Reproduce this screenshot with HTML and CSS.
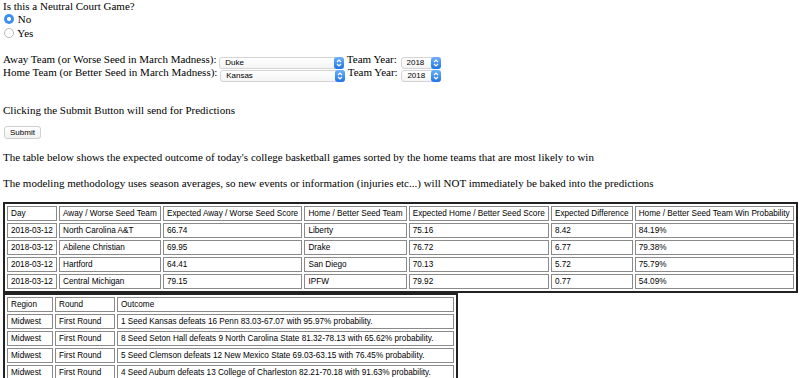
FILE: index.html
```html
<!DOCTYPE html>
<html>
<head>
    <title>College Basketball Predictions</title>
    <link rel="stylesheet" href="styles.css">
</head>
<body>
    <form id="gameForm">
        Is this a Neutral Court Game?<br>
        <label class="choice"><input type="radio" name="neutral" value="no" checked> No</label><br>
        <label class="choice"><input type="radio" name="neutral" value="yes"> Yes</label><br>
        <br>
        <div class="team-row">
            Away Team (or Worse Seed in March Madness):
            <span class="picker picker-team">
                <select id="awayTeam"><option>Duke</option><option>Kansas</option></select>
                <span class="arrows"><svg width="8" height="10" viewBox="0 0 8 10"><path d="M2 4 L4 2 L6 4 M2 6 L4 8 L6 6" fill="none" stroke="#fff" stroke-width="1.2"/></svg></span>
            </span>
            Team Year:
            <span class="picker picker-year">
                <select id="awayYear"><option>2018</option><option>2017</option></select>
                <span class="arrows"><svg width="8" height="10" viewBox="0 0 8 10"><path d="M2 4 L4 2 L6 4 M2 6 L4 8 L6 6" fill="none" stroke="#fff" stroke-width="1.2"/></svg></span>
            </span>
        </div>
        <div class="team-row">
            Home Team (or Better Seed in March Madness):
            <span class="picker picker-team">
                <select id="homeTeam"><option>Kansas</option><option>Duke</option></select>
                <span class="arrows"><svg width="8" height="10" viewBox="0 0 8 10"><path d="M2 4 L4 2 L6 4 M2 6 L4 8 L6 6" fill="none" stroke="#fff" stroke-width="1.2"/></svg></span>
            </span>
            Team Year:
            <span class="picker picker-year">
                <select id="homeYear"><option>2018</option><option>2017</option></select>
                <span class="arrows"><svg width="8" height="10" viewBox="0 0 8 10"><path d="M2 4 L4 2 L6 4 M2 6 L4 8 L6 6" fill="none" stroke="#fff" stroke-width="1.2"/></svg></span>
            </span>
        </div>
        <br>
        <p>Clicking the Submit Button will send for Predictions</p>
        <button type="submit" class="submit">Submit</button>
    </form>

    <p class="note">The table below shows the expected outcome of today's college basketball games sorted by the home teams that are most likely to win</p>
    <p class="note">The modeling methodology uses season averages, so new events or information (injuries etc...) will NOT immediately be baked into the predictions</p>

    <table class="grid predictions">
        <tr>
            <th>Day</th>
            <th>Away / Worse Seed Team</th>
            <th>Expected Away / Worse Seed Score</th>
            <th>Home / Better Seed Team</th>
            <th>Expected Home / Better Seed Score</th>
            <th>Expected Difference</th>
            <th>Home / Better Seed Team Win Probability</th>
        </tr>
        <tr><td>2018-03-12</td><td>North Carolina A&amp;T</td><td>66.74</td><td>Liberty</td><td>75.16</td><td>8.42</td><td>84.19%</td></tr>
        <tr><td>2018-03-12</td><td>Abilene Christian</td><td>69.95</td><td>Drake</td><td>76.72</td><td>6.77</td><td>79.38%</td></tr>
        <tr><td>2018-03-12</td><td>Hartford</td><td>64.41</td><td>San Diego</td><td>70.13</td><td>5.72</td><td>75.79%</td></tr>
        <tr><td>2018-03-12</td><td>Central Michigan</td><td>79.15</td><td>IPFW</td><td>79.92</td><td>0.77</td><td>54.09%</td></tr>
    </table>

    <table class="grid bracket">
        <tr>
            <th class="c-region">Region</th>
            <th class="c-round">Round</th>
            <th>Outcome</th>
        </tr>
        <tr><td>Midwest</td><td>First Round</td><td>1 Seed Kansas defeats 16 Penn 83.03-67.07 with 95.97% probability.</td></tr>
        <tr><td>Midwest</td><td>First Round</td><td>8 Seed Seton Hall defeats 9 North Carolina State 81.32-78.13 with 65.62% probability.</td></tr>
        <tr><td>Midwest</td><td>First Round</td><td>5 Seed Clemson defeats 12 New Mexico State 69.03-63.15 with 76.45% probability.</td></tr>
        <tr><td>Midwest</td><td>First Round</td><td>4 Seed Auburn defeats 13 College of Charleston 82.21-70.18 with 91.63% probability.</td></tr>
    </table>
</body>
</html>
```

FILE: styles.css
```css
body {
    font-family: "Liberation Serif", "Times New Roman", serif;
    font-size: 11px;
    line-height: 13.3px;
    color: #000;
    background-color: #fff;
    margin: 0 2px 0 3px;
}

p {
    margin: 11px 0;
}

p.note {
    margin: 12px 0;
}

.choice input[type="radio"] {
    appearance: none;
    -webkit-appearance: none;
    width: 10px;
    height: 10px;
    margin: 0 1px 0 1px;
    border: 1px solid #b9b9b9;
    border-radius: 50%;
    background-color: #fff;
    vertical-align: -1px;
    box-sizing: border-box;
}

.choice input[type="radio"]:checked {
    border: none;
    background: radial-gradient(circle, #fff 0, #fff 1.8px, #3b8ef5 2.3px);
}

.team-row {
    height: 13.3px;
}

.picker {
    position: relative;
    display: inline-block;
    vertical-align: -2px;
    height: 12px;
}

.picker select {
    appearance: none;
    -webkit-appearance: none;
    font-family: "Liberation Sans", Arial, sans-serif;
    font-size: 8px;
    height: 12px;
    line-height: 10px;
    padding: 0 0 0 5px;
    margin: 0;
    border: 1px solid #d4d4d4;
    border-radius: 3px;
    background: linear-gradient(#fff, #f4f4f4);
    color: #000;
    display: block;
}

.picker-team select {
    width: 125px;
}

.picker-year {
    margin-left: 1px;
}

.picker-year select {
    width: 40px;
}

.arrows {
    position: absolute;
    top: 0;
    right: 0;
    width: 10px;
    height: 12px;
    border-radius: 3px;
    background: linear-gradient(#6db1fa, #1e74e8);
    display: flex;
    align-items: center;
    justify-content: center;
}

.submit {
    display: block;
    font-family: "Liberation Sans", Arial, sans-serif;
    font-size: 8px;
    height: 13px;
    padding: 0 5px;
    margin: -2px 0 0 1px;
    border: 1px solid #cfcfcf;
    border-radius: 3px;
    background: linear-gradient(#fff, #f2f2f2);
    color: #000;
}

.grid {
    font-family: "Liberation Sans", Arial, sans-serif;
    font-size: 8.2px;
    line-height: 9.5px;
    border: 2px solid #222;
    border-spacing: 2px;
}

.grid th,
.grid td {
    border: 1px solid #8a8a8a;
    padding: 2px 3px 1.5px;
    text-align: left;
    font-weight: normal;
    white-space: nowrap;
}

.predictions {
    width: 100%;
    margin-top: 12px;
}

.bracket {
    width: 455px;
}

.c-region { width: 38px; }
.c-round { width: 52px; }
```
